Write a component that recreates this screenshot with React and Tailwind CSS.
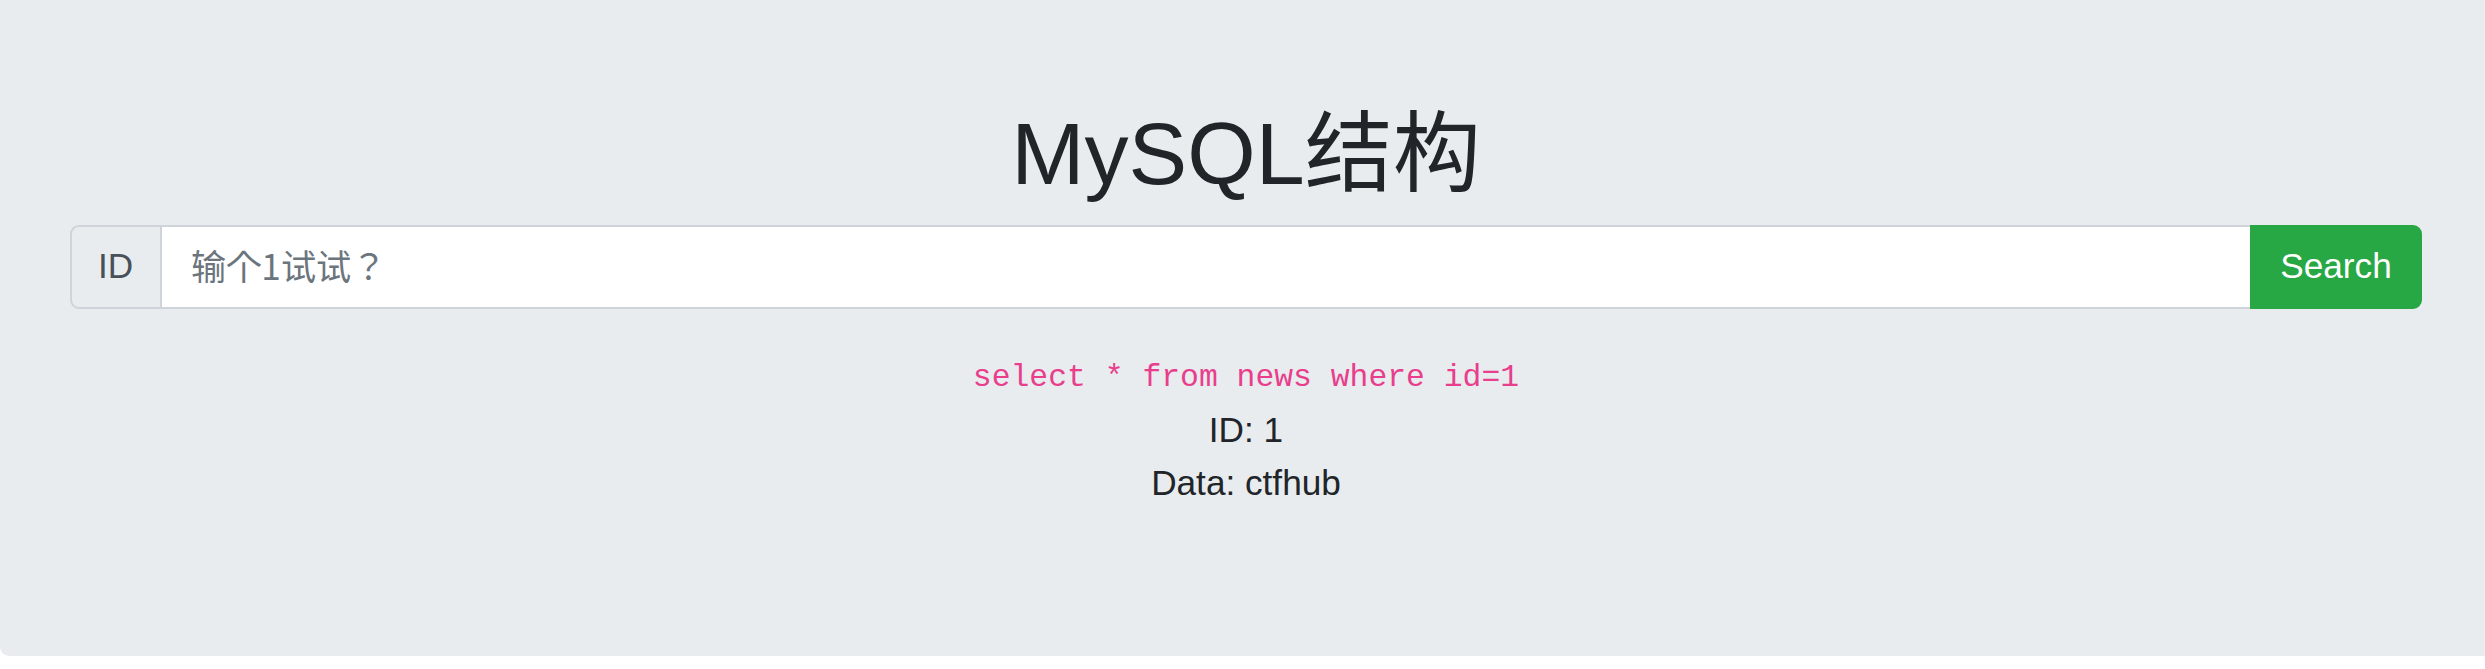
import React from 'react';

export default function App() {
  return (
    <div className="min-h-screen bg-white font-['Liberation_Sans','Noto_Sans_CJK_SC',sans-serif] text-[#212529]">
      <div className="bg-[#e9ecef] rounded-bl-[9px] pt-[101px] pb-[146px] pl-[70px] pr-[63px]">
        <h1 className="text-center text-[88px] leading-[1.2] font-normal mb-[18px]">MySQL结构</h1>

        <form className="flex h-[84px] text-[35.2px] leading-[1.5]" onSubmit={(e) => e.preventDefault()}>
          <span className="flex items-center px-[26px] bg-[#e9ecef] text-[#495057] border-2 border-[#ced4da] rounded-l-[9px] w-[92px]">ID</span>
          <input
            type="text"
            name="id"
            placeholder="输个1试试？"
            className="flex-1 min-w-0 bg-white border-y-2 border-[#ced4da] pl-[29px] pr-[26px] pt-[3px] text-[#495057] placeholder:text-[#6c757d] placeholder:font-['Noto_Sans_CJK_JP',sans-serif] outline-none"
          />
          <button type="submit" className="w-[172px] bg-[#28a745] border-2 border-[#28a745] text-white rounded-r-[9px]">Search</button>
        </form>

        <div className="mt-[39px] text-center text-[35.2px] leading-[52.8px]">
          <code className="font-['Liberation_Mono',monospace] text-[31.4px] text-[#e83e8c]">select * from news where id=1</code>
          <br />
          ID: 1
          <br />
          Data: ctfhub
        </div>
      </div>
    </div>
  );
}
